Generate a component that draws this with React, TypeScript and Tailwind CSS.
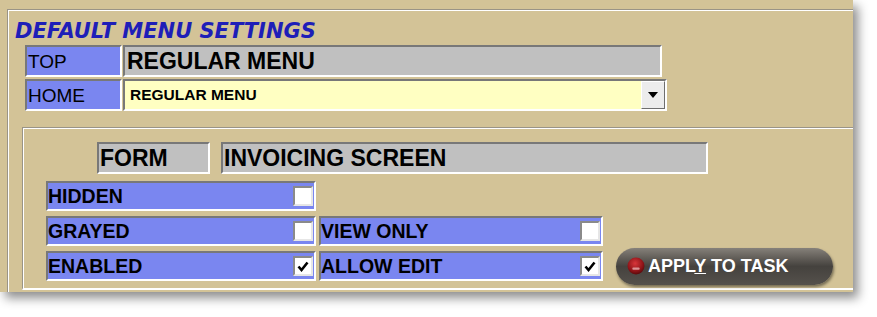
const sunken =
  "border-2 border-t-[#787878] border-l-[#787878] border-b-white border-r-white";

function Check({ checked }: { checked: boolean }) {
  return (
    <div className="w-[20px] h-[20px] bg-white border-2 border-t-[#8a8a8a] border-l-[#8a8a8a] border-b-[#e6e6e6] border-r-[#e6e6e6] flex items-center justify-center">
      {checked && (
        <svg width="12" height="11" viewBox="0 0 12 11">
          <path d="M1.5 5.5 L4.5 9 L10.5 1.5" fill="none" stroke="#000" strokeWidth="2.6" />
        </svg>
      )}
    </div>
  );
}

function OptionRow({ label, checked, width }: { label: string; checked: boolean; width: string }) {
  return (
    <div className={`${width} h-[30px] ${sunken} bg-[#7a86f0] flex items-center justify-between pr-[1px]`}>
      <span className="pt-[2px] text-[19.5px] font-bold text-black leading-none">{label}</span>
      <Check checked={checked} />
    </div>
  );
}

export default function App() {
  return (
    <div className="w-[877px] h-[317px] bg-white overflow-hidden font-['Liberation_Sans',Arial,sans-serif]">
      <div className="w-[853px] h-[292px] bg-[#d3c397] overflow-hidden shadow-[5px_6px_10px_rgba(0,0,0,0.45)]">
        {/* group box */}
        <div className="mt-[9px] ml-[7px] h-[290px] border-t border-l border-[#9a9486] shadow-[inset_1px_1px_0_#ffffff]">
          <div className="pt-[9px] pl-[7px] text-[21px] leading-[24px] font-bold italic text-[#1e1eb8] font-['DejaVu_Sans',Verdana,sans-serif]">
            DEFAULT MENU SETTINGS
          </div>

          <div className="ml-[17px] mt-[2px] flex flex-col gap-[2px]">
            <div className="flex gap-[1px] h-[32px]">
              <div className={`w-[97px] ${sunken} bg-[#7a86f0] flex items-center pl-[1px] text-[19px] text-black leading-none`}>
                TOP
              </div>
              <div className={`w-[539px] ${sunken} bg-[#c0c0c0] flex items-center pl-[2px] text-[23px] font-bold text-black leading-none`}>
                REGULAR MENU
              </div>
            </div>
            <div className="flex gap-[1px] h-[32px]">
              <div className={`w-[97px] ${sunken} bg-[#7a86f0] flex items-center pl-[1px] text-[19px] text-black leading-none`}>
                HOME
              </div>
              <div className={`w-[544px] ${sunken} bg-[#ffffc2] flex items-center`}>
                <span className="flex-1 pl-[5px] text-[15.5px] font-bold text-black leading-none">REGULAR MENU</span>
                <div className="w-[24px] h-full bg-[#ececec] border border-t-white border-l-white border-b-[#6e6e6e] border-r-[#6e6e6e] flex items-center justify-center">
                  <svg width="10" height="6" viewBox="0 0 10 6">
                    <path d="M0 0 L10 0 L5 6 Z" fill="#000" />
                  </svg>
                </div>
              </div>
            </div>
          </div>

          {/* inner panel */}
          <div className="ml-[14px] mt-[16px] h-[163px] border-t border-l border-[#9a9486] border-b-2 border-b-white shadow-[inset_1px_1px_0_#ffffff] pt-[14px]">
            <div className="flex h-[32px] ml-[74px] gap-[11px]">
              <div className={`w-[113px] ${sunken} bg-[#c0c0c0] flex items-center pl-[1px] text-[23px] font-bold text-black leading-none`}>
                FORM
              </div>
              <div className={`w-[487px] ${sunken} bg-[#c0c0c0] flex items-center pl-[1px] text-[23px] font-bold text-black leading-none`}>
                INVOICING SCREEN
              </div>
            </div>

            <div className="mt-[7px] ml-[23px] flex flex-col gap-[5px]">
              <div className="flex">
                <OptionRow label="HIDDEN" checked={false} width="w-[270px]" />
              </div>
              <div className="flex gap-[3px]">
                <OptionRow label="GRAYED" checked={false} width="w-[270px]" />
                <OptionRow label="VIEW ONLY" checked={false} width="w-[284px]" />
              </div>
              <div className="flex gap-[3px] h-[30px] items-center">
                <OptionRow label="ENABLED" checked={true} width="w-[270px]" />
                <OptionRow label="ALLOW EDIT" checked={true} width="w-[284px]" />
                <button className="ml-[10px] w-[217px] h-[37px] shrink-0 rounded-full bg-gradient-to-b from-[#86817a] via-[#45423e] to-[#55514c] shadow-[1px_2px_3px_rgba(0,0,0,0.45)] flex items-center pl-[11px] gap-[3px] text-white text-[18px] font-bold leading-none">
                  <svg width="18" height="18" viewBox="0 0 17 17">
                    <defs>
                      <radialGradient id="ball" cx="0.45" cy="0.35" r="0.65">
                        <stop offset="0" stopColor="#d8363a" />
                        <stop offset="0.7" stopColor="#8e1418" />
                        <stop offset="1" stopColor="#5a0a0c" />
                      </radialGradient>
                    </defs>
                    <circle cx="8.5" cy="8.5" r="8" fill="url(#ball)" />
                    <rect x="5" y="10" width="7" height="2" rx="1" fill="#e8b0b0" opacity="0.8" />
                  </svg>
                  <span>
                    APPL<span className="underline">Y</span> TO TASK
                  </span>
                </button>
              </div>
            </div>
          </div>
        </div>
      </div>
    </div>
  );
}
